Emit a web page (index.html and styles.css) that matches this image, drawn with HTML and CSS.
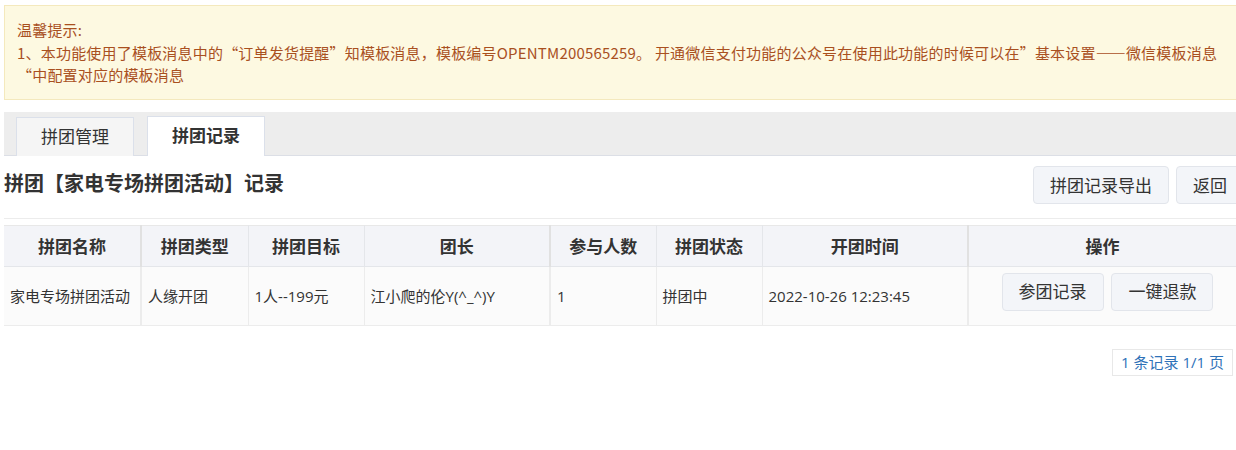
FILE: index.html
```html
<!DOCTYPE html>
<html lang="zh-CN">
<head>
    <meta charset="UTF-8">
    <title>拼团记录</title>
    <link rel="stylesheet" href="styles.css">
</head>
<body>
<div class="page">
    <div class="tips">
        <p>温馨提示:</p>
        <p>1、本功能使用了模板消息中的“订单发货提醒”知模板消息，模板编号OPENTM200565259。 开通微信支付功能的公众号在使用此功能的时候可以在”基本设置——微信模板消息“中配置对应的模板消息</p>
    </div>

    <div class="tabs">
        <a class="tab">拼团管理</a>
        <a class="tab active">拼团记录</a>
    </div>

    <div class="toolbar">
        <h2 class="title">拼团【家电专场拼团活动】记录</h2>
        <div class="actions">
            <button class="btn">拼团记录导出</button>
            <button class="btn">返回</button>
        </div>
    </div>

    <table class="records">
        <colgroup>
            <col style="width:137px">
            <col style="width:107px">
            <col style="width:116px">
            <col style="width:186px">
            <col style="width:106px">
            <col style="width:106px">
            <col style="width:206px">
            <col>
        </colgroup>
        <thead>
            <tr>
                <th>拼团名称</th>
                <th class="sep">拼团类型</th>
                <th>拼团目标</th>
                <th>团长</th>
                <th class="sep">参与人数</th>
                <th>拼团状态</th>
                <th>开团时间</th>
                <th class="sep">操作</th>
            </tr>
        </thead>
        <tbody>
            <tr>
                <td>家电专场拼团活动</td>
                <td class="sep">人缘开团</td>
                <td>1人--199元</td>
                <td>江小爬的伦Y(^_^)Y</td>
                <td class="sep">1</td>
                <td>拼团中</td>
                <td>2022-10-26 12:23:45</td>
                <td class="sep ops">
                    <button class="btn">参团记录</button>
                    <button class="btn">一键退款</button>
                </td>
            </tr>
        </tbody>
    </table>

    <div class="pager">
        <span class="pager-info">1 条记录 1/1 页</span>
    </div>
</div>
</body>
</html>
```

FILE: styles.css
```css
html, body {
    margin: 0;
    padding: 0;
    overflow: hidden;
}

body {
    font-family: "Open Sans", "Noto Sans CJK SC", sans-serif;
    color: #333;
    background-color: #ffffff;
}

.page {
    width: 1236px;
    margin-left: 4px;
    padding-top: 5px;
}

/* warning box */
.tips {
    background-color: #fdf9e1;
    border: 1px solid #f4e9bd;
    padding: 13px 12px 12px;
    font-family: "Noto Sans CJK SC", sans-serif;
    color: #a9501f;
    font-size: 15px;
    letter-spacing: 0.2px;
    line-height: 22.5px;
    width: 1208px;
}

.tips p {
    margin: 0;
}

/* tabs */
.tabs {
    margin-top: 12px;
    height: 44px;
    background-color: #ededed;
    border-bottom: 1px solid #dcdfe6;
    display: flex;
    align-items: flex-end;
    gap: 13px;
    padding-left: 12px;
    box-sizing: border-box;
}

.tab {
    display: block;
    height: 39px;
    line-height: 38px;
    padding: 0 24px;
    font-size: 17px;
    color: #333;
    background-color: #f5f5f5;
    border: 1px solid #dbe0ea;
    border-bottom: none;
    box-sizing: border-box;
    margin-bottom: -1px;
}

.tab.active {
    background-color: #ffffff;
    font-weight: bold;
    height: 40px;
}

/* title + buttons */
.toolbar {
    display: flex;
    justify-content: space-between;
    align-items: center;
    height: 62px;
    border-bottom: 1px solid #ececec;
}

.title {
    margin: 0;
    font-size: 20px;
    font-weight: bold;
    color: #333;
    margin-top: -8px;
}

.actions {
    display: flex;
    gap: 7px;
    margin-top: -4px;
    margin-right: -4px;
}

.btn {
    font-family: inherit;
    font-size: 17px;
    color: #333;
    background-color: #f3f5f9;
    border: 1px solid #e2e5eb;
    border-radius: 4px;
    height: 38px;
    padding: 0 16px;
    cursor: pointer;
}

/* table */
.records {
    margin-top: 6px;
    width: 1232px;
    border-collapse: collapse;
    table-layout: fixed;
}

.records th {
    height: 40px;
    background-color: #f3f4f8;
    font-size: 17px;
    font-weight: bold;
    text-align: center;
    border: 1px solid #e4e6ea;
    border-top-color: #e8e8e8;
    padding: 0;
}

.records td {
    height: 58px;
    background-color: #fbfbfb;
    font-size: 15px;
    padding: 0 6px;
    border: 1px solid #ececec;
    border-top-color: #e3e5ee;
}

.records th:first-child,
.records td:first-child {
    border-left: none;
}

.records th:last-child,
.records td:last-child {
    border-right: none;
}

.records .sep {
    border-left: 2px solid #e1e1e1;
}

.records td.sep {
    border-left-color: #ececec;
}

.records td.ops {
    text-align: center;
    line-height: 0;
    padding: 0 6px 8px 16px;
    height: 50px;
}

.ops .btn {
    margin: 0 2px;
    line-height: 36px;
    vertical-align: middle;
}

/* pager */
.pager {
    display: flex;
    justify-content: flex-end;
    margin-top: 23px;
    padding-right: 7px;
}

.pager-info {
    border: 1px solid #e8e8e8;
    padding: 0 8px;
    height: 25px;
    line-height: 25px;
    font-size: 15px;
    color: #2f72b8;
}
```
